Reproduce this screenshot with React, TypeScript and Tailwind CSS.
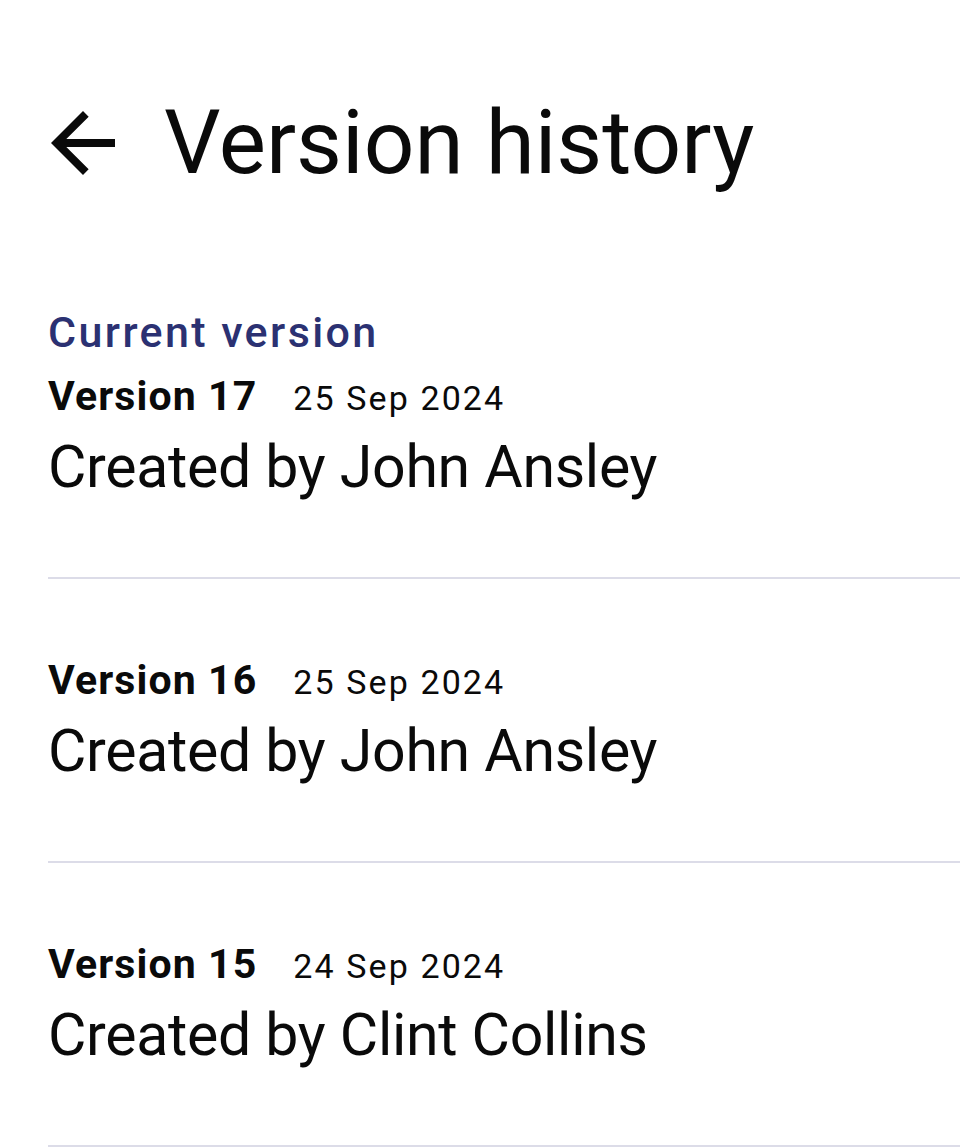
type Version = { n: number; date: string; author: string; current?: boolean }

const versions: Version[] = [
  { n: 17, date: '25 Sep 2024', author: 'John Ansley', current: true },
  { n: 16, date: '25 Sep 2024', author: 'John Ansley' },
  { n: 15, date: '24 Sep 2024', author: 'Clint Collins' },
]

function BackArrow() {
  return (
    <svg width="64" height="64" viewBox="4 4 16 16" className="shrink-0" aria-hidden>
      <path d="M20 11H7.83l5.59-5.59L12 4l-8 8 8 8 1.41-1.41L7.83 13H20v-2z" fill="#0a0a0a" />
    </svg>
  )
}

function Row({ v }: { v: Version }) {
  return (
    <div className={'border-b-2 border-[#dcdce8] pb-[75px] ' + (v.current ? '' : 'pt-[76px]')}>
      {v.current && (
        <div className="mb-[14px] text-[43px] font-medium leading-[50px] tracking-[2.4px] text-[#2b3172]">
          Current version
        </div>
      )}
      <div className="flex items-baseline gap-[36px] leading-[50px] text-[#0a0a0a]">
        <span className="text-[41px] font-bold tracking-[1.1px]">Version {v.n}</span>
        <span className="text-[34px] tracking-[2.1px]">{v.date}</span>
      </div>
      <div className="mt-[9px] text-[59px] leading-[70px] tracking-[-0.3px] text-[#0a0a0a]">
        Created by {v.author}
      </div>
    </div>
  )
}

export default function App() {
  return (
    <div className="min-h-[1148px] bg-white font-['Roboto',sans-serif]">
      <header className="flex items-center gap-[49px] pl-[51px] pt-[93px]">
        <BackArrow />
        <h1 className="text-[89px] leading-[100px] text-[#0a0a0a]">Version history</h1>
      </header>
      <div className="mt-[114px] pl-[48px]">
        {versions.map((v) => (
          <Row key={v.n} v={v} />
        ))}
      </div>
    </div>
  )
}
